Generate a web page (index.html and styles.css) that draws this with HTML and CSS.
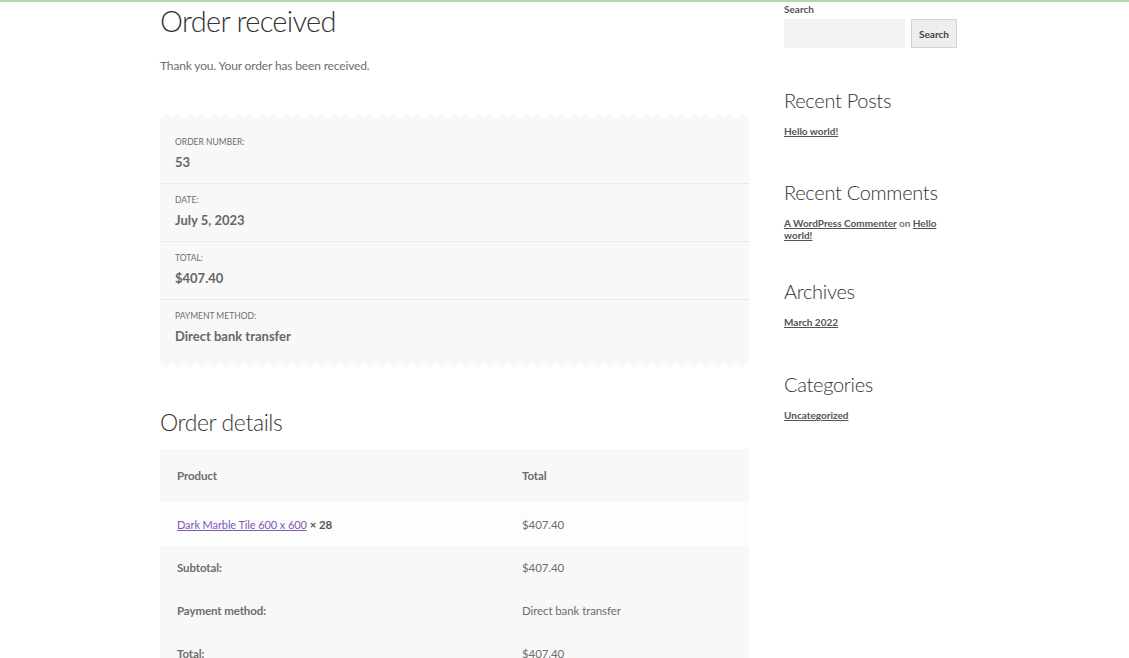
FILE: index.html
```html
<!DOCTYPE html>
<html lang="en">
<head>
    <meta charset="UTF-8">
    <meta name="viewport" content="width=device-width, initial-scale=1.0">
    <title>Order received</title>
    <link rel="stylesheet" href="styles.css">
</head>
<body>

<div class="topbar"></div>

<div class="page">

    <main class="content">
        <h1 class="page-title">Order received</h1>
        <p class="thanks">Thank you. Your order has been received.</p>

        <div class="overview">
            <svg class="edge" width="100%" height="6">
                <defs>
                    <pattern id="zigTop" width="12" height="6" patternUnits="userSpaceOnUse">
                        <polygon points="0,6 6,0 12,6" fill="#f8f8f8"/>
                    </pattern>
                </defs>
                <rect width="100%" height="6" fill="url(#zigTop)"/>
            </svg>

            <ul class="overview-list">
                <li>
                    <span class="ov-label">Order number:</span>
                    <strong class="ov-value">53</strong>
                </li>
                <li>
                    <span class="ov-label">Date:</span>
                    <strong class="ov-value">July 5, 2023</strong>
                </li>
                <li>
                    <span class="ov-label">Total:</span>
                    <strong class="ov-value">$407.40</strong>
                </li>
                <li>
                    <span class="ov-label">Payment method:</span>
                    <strong class="ov-value">Direct bank transfer</strong>
                </li>
            </ul>

            <svg class="edge" width="100%" height="6">
                <defs>
                    <pattern id="zigBottom" width="12" height="6" patternUnits="userSpaceOnUse">
                        <polygon points="0,0 6,6 12,0" fill="#f8f8f8"/>
                    </pattern>
                </defs>
                <rect width="100%" height="6" fill="url(#zigBottom)"/>
            </svg>
        </div>

        <h2 class="section-title">Order details</h2>

        <table class="order-table">
            <thead>
                <tr>
                    <th class="col-product">Product</th>
                    <th>Total</th>
                </tr>
            </thead>
            <tbody>
                <tr class="item-row">
                    <td><a href="#">Dark Marble Tile 600 x 600</a> <strong class="qty">&times;&nbsp;28</strong></td>
                    <td>$407.40</td>
                </tr>
            </tbody>
            <tfoot>
                <tr>
                    <th>Subtotal:</th>
                    <td>$407.40</td>
                </tr>
                <tr>
                    <th>Payment method:</th>
                    <td>Direct bank transfer</td>
                </tr>
                <tr>
                    <th>Total:</th>
                    <td>$407.40</td>
                </tr>
            </tfoot>
        </table>
    </main>

    <aside class="sidebar">
        <form class="search-form">
            <label class="search-label" for="s">Search</label>
            <div class="search-row">
                <input id="s" class="search-input" type="text">
                <button class="search-button" type="submit">Search</button>
            </div>
        </form>

        <section class="widget widget-posts">
            <h2 class="widget-title">Recent Posts</h2>
            <a class="widget-link" href="#">Hello world!</a>
        </section>

        <section class="widget widget-comments">
            <h2 class="widget-title">Recent Comments</h2>
            <p class="widget-text"><a class="widget-link" href="#">A WordPress Commenter</a> on <a class="widget-link" href="#">Hello world!</a></p>
        </section>

        <section class="widget widget-archives">
            <h2 class="widget-title">Archives</h2>
            <a class="widget-link" href="#">March 2022</a>
        </section>

        <section class="widget widget-categories">
            <h2 class="widget-title">Categories</h2>
            <a class="widget-link" href="#">Uncategorized</a>
        </section>
    </aside>

</div>

</body>
</html>
```

FILE: styles.css
```css
*{
    padding: 0;
    margin: 0;
    box-sizing: border-box;
}

body{
    background-color: #fff;
    font-family: Lato, "Open Sans", sans-serif;
    color: #6d6d6d;
    font-size: 13px;
}

.topbar
{
    height: 2px;
    background-color: #b6d6b1;
}

.page
{
    display: flex;
    gap: 35px;
    margin-left: 160px;
}

.content
{
    width: 589px;
}

.page-title
{
    font-weight: 300;
    font-size: 29px;
    line-height: 38px;
    letter-spacing: -0.7px;
    color: #333;
}

.thanks
{
    margin-top: 16px;
    font-size: 12px;
    line-height: 20px;
    letter-spacing: -0.15px;
}

/* order overview box with the torn edges */
.overview
{
    margin-top: 37px;
}

.edge
{
    display: block;
}

.overview-list
{
    list-style: none;
    background-color: #f8f8f8;
    padding: 6px 0 5px 0;
}

.overview-list li
{
    display: flex;
    flex-direction: column;
    gap: 4px;
    padding: 12px 15px 11px 15px;
}

.overview-list li + li
{
    padding-top: 11px;
    border-top: 1px dotted #ddd;
}

.ov-label
{
    font-size: 8.5px;
    line-height: 11px;
    text-transform: uppercase;
}

.ov-value
{
    font-size: 13px;
    line-height: 20px;
    color: #666;
}

.section-title
{
    margin-top: 39px;
    font-weight: 300;
    font-size: 23px;
    line-height: 30px;
    letter-spacing: -0.4px;
    color: #333;
}

.order-table
{
    margin-top: 12px;
    width: 100%;
    border-collapse: collapse;
    font-size: 11.5px;
    letter-spacing: -0.1px;
}

.order-table th,
.order-table td
{
    text-align: left;
    padding: 0 17px;
    background-color: #f8f8f8;
    color: #6d6d6d;
}

.order-table thead th
{
    height: 53px;
}

.col-product
{
    width: 345px;
}

.order-table .item-row td
{
    height: 44px;
    background-color: #fdfdfd;
}

.order-table tfoot th,
.order-table tfoot td
{
    height: 43px;
}

.order-table a
{
    font-size: 11px;
    color: #7f5ab6;
}

.qty
{
    color: #555;
}

/* sidebar */
.sidebar
{
    width: 173px;
    font-size: 10px;
}

.search-label
{
    display: block;
    font-weight: 700;
    line-height: 14px;
    color: #555;
}

.search-row
{
    display: flex;
    gap: 6px;
    margin-top: 3px;
}

.search-input
{
    width: 121px;
    height: 29px;
    border: none;
    background-color: #f2f2f2;
}

.search-button
{
    width: 46px;
    height: 29px;
    border: 1px solid #d3d3d3;
    background-color: #eee;
    font-family: inherit;
    font-weight: 700;
    font-size: 10px;
    color: #444;
}

.widget-title
{
    font-weight: 300;
    font-size: 20px;
    line-height: 26px;
    letter-spacing: -0.3px;
    color: #333;
    margin-bottom: 12px;
}

.widget-posts
{
    margin-top: 39px;
}

.widget-comments
{
    margin-top: 42px;
}

.widget-archives
{
    margin-top: 37px;
}

.widget-categories
{
    margin-top: 43px;
}

.widget-link
{
    font-weight: 700;
    line-height: 12px;
    color: #555;
}

.widget-text
{
    line-height: 12px;
    font-weight: 700;
    color: #777;
}
```
